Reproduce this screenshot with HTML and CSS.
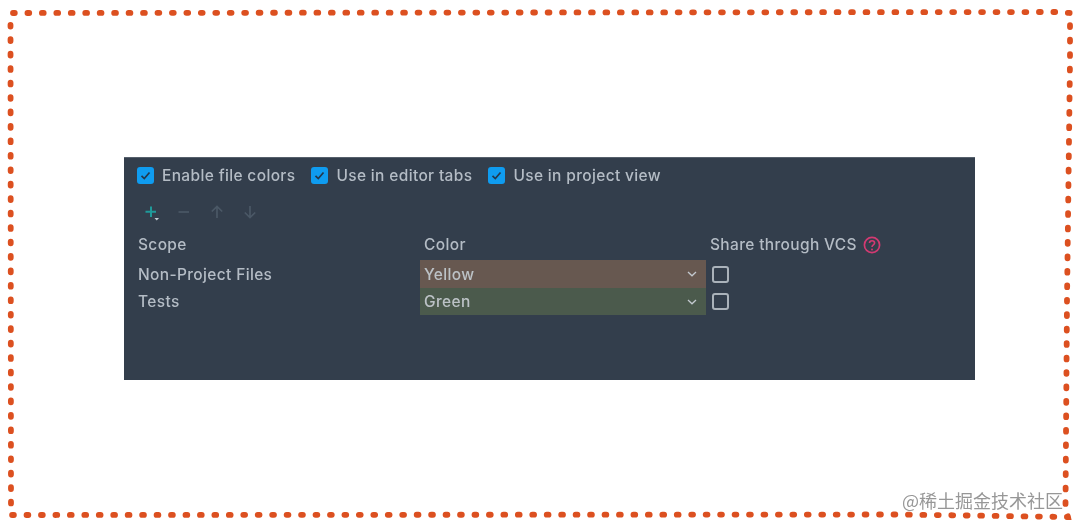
FILE: index.html
```html
<!DOCTYPE html>
<html lang="zh">
<head>
<meta charset="utf-8">
<title>File Colors</title>
<link rel="stylesheet" href="styles.css">
</head>
<body>
<svg class="frame" width="1080" height="528" viewBox="0 0 1080 528" fill="none">
  <path class="frame-line" d="M13 13 L1056 12 L1070 13 L1070 60 L1067 300 L1065.500 505 L1068 517 L900 514.500 L11 515 L10.500 22 Z"/>
</svg>
<main class="panel">
  <div class="options">
    <label class="option"><span class="check on"><svg viewBox="0 0 17 17" width="17" height="17"><path d="M4.500 8.800 L7.300 11.500 L12.500 5.500" fill="none" stroke="#24384c" stroke-width="1.700"/></svg></span>Enable file colors</label>
    <label class="option"><span class="check on"><svg viewBox="0 0 17 17" width="17" height="17"><path d="M4.500 8.800 L7.300 11.500 L12.500 5.500" fill="none" stroke="#24384c" stroke-width="1.700"/></svg></span>Use in editor tabs</label>
    <label class="option"><span class="check on"><svg viewBox="0 0 17 17" width="17" height="17"><path d="M4.500 8.800 L7.300 11.500 L12.500 5.500" fill="none" stroke="#24384c" stroke-width="1.700"/></svg></span>Use in project view</label>
  </div>
  <div class="toolbar">
    <svg class="tool" viewBox="0 0 18 18" width="18" height="18"><path d="M9 3.500 V14 M3.500 8.800 H14" stroke="#1f9a9a" stroke-width="2" fill="none"/><path d="M12.500 15 H17 L14.750 17.500 Z" fill="#c4ccd4"/></svg>
    <svg class="tool" viewBox="0 0 18 18" width="18" height="18"><path d="M3.500 9 H14" stroke="#4b5866" stroke-width="1.700" fill="none"/></svg>
    <svg class="tool" viewBox="0 0 18 18" width="18" height="18"><path d="M9 15 V3.500 M3.800 8.500 L9 3.500 L14.200 8.500" stroke="#4b5866" stroke-width="1.700" fill="none"/></svg>
    <svg class="tool" viewBox="0 0 18 18" width="18" height="18"><path d="M9 3 V14.500 M3.800 9.500 L9 14.500 L14.200 9.500" stroke="#4b5866" stroke-width="1.700" fill="none"/></svg>
  </div>
  <div class="table">
    <div class="head">Scope</div>
    <div class="head">Color</div>
    <div class="head head-share">Share through VCS
      <svg viewBox="0 0 18 18" width="18" height="18"><circle cx="9" cy="9" r="7.600" fill="none" stroke="#d23a72" stroke-width="1.700"/><path d="M6.500 7 C6.500 3.900 11.600 3.900 11.600 7 C11.600 9 9 8.800 9 11" fill="none" stroke="#d23a72" stroke-width="1.600"/><circle cx="9" cy="13.400" r="1" fill="#d23a72"/></svg>
    </div>
    <div class="cell">Non-Project Files</div>
    <div class="cell color yellow">Yellow<svg class="chev" viewBox="0 0 10 6" width="10" height="6"><path d="M1 1 L5 4.800 L9 1" fill="none" stroke="#c3c9cf" stroke-width="1.300"/></svg></div>
    <div class="cell share"><span class="check"></span></div>
    <div class="cell">Tests</div>
    <div class="cell color green">Green<svg class="chev" viewBox="0 0 10 6" width="10" height="6"><path d="M1 1 L5 4.800 L9 1" fill="none" stroke="#c3c9cf" stroke-width="1.300"/></svg></div>
    <div class="cell share"><span class="check"></span></div>
  </div>
</main>
<div class="watermark">@稀土掘金技术社区</div>
</body>
</html>
```
FILE: styles.css
```css
* { box-sizing: border-box; }
html, body { margin: 0; height: 528px; overflow: hidden; background: #fff; }
body { position: relative; padding: 157px 105px 148px 124px; font-family: Inter, "Liberation Sans", sans-serif; }
.frame { position: absolute; left: 0; top: 0; filter: blur(0.4px); }
.frame-line { stroke: #dc5020; stroke-width: 5.800; stroke-linecap: round; stroke-dasharray: 1.800 12.650; }
.panel { height: 223px; background: #333e4c; color: #b4bcc5; font-size: 15.500px; font-weight: 500; letter-spacing: 0.350px; filter: blur(0.5px); padding: 8px 0 0 13px; border-top: 1px solid #56606c; }
.options { display: flex; gap: 16px; height: 18px; align-items: center; }
.option { display: flex; align-items: center; gap: 8px; }
.check { display: block; width: 17px; height: 17px; border: 2px solid #aab2ba; border-radius: 3px; background: transparent; }
.check.on { background: #0f9cf0; border: 0; }
.check svg { display: block; }
.toolbar { display: flex; gap: 15px; margin-top: 19px; padding-left: 5px; height: 18px; }
.table { display: grid; grid-template-columns: 283px 286px 1fr; grid-template-rows: 31px 28px 27px; margin: 8px 0 0 -13px; padding-left: 13px; }
.head { display: flex; align-items: center; padding-left: 1px; height: 31px; }
.head:nth-child(2) { padding-left: 4px; }
.head-share { gap: 6px; padding-left: 4px; }
.cell { display: flex; align-items: center; padding-left: 1px; }
.color { padding: 0 9px 0 4px; justify-content: space-between; color: #bcc2c6; }
.color.yellow { background: #675850; }
.color.green { background: #4b5a4c; }
.share { padding-left: 0; margin-left: 6px; }
.watermark { position: absolute; left: 902px; top: 488px; font-family: "Noto Sans CJK SC", sans-serif; font-size: 18px; line-height: 24px; color: #979797; text-shadow: 0 0 2px #fff; filter: blur(0.5px); white-space: nowrap; }
```
